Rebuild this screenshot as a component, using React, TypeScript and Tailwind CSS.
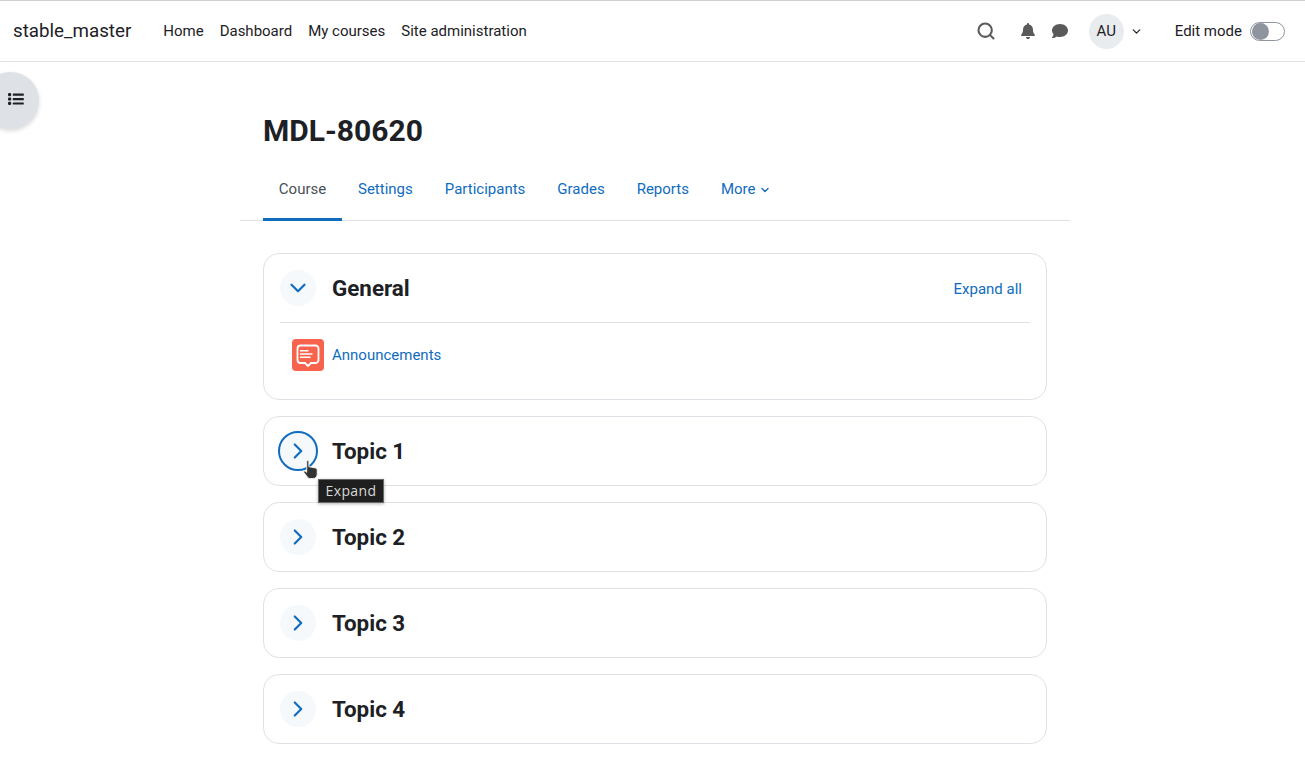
import React from "react";
import { ChevronDown, ChevronRight, Search } from "lucide-react";

const navLinks = ["Home", "Dashboard", "My courses", "Site administration"];
const tabs = ["Settings", "Participants", "Grades", "Reports"];

const BellIcon = () => (
  <svg viewBox="0 0 448 512" className="w-[14px] h-4 fill-[#5a5a5a]">
    <path d="M224 0c-17.7 0-32 14.3-32 32v19.2C119 66 64 130.6 64 208v25.4c0 45.4-15.5 89.5-43.8 124.9L5.3 377c-5.8 7.2-6.9 17.1-2.9 25.4S14.8 416 24 416h400c9.2 0 17.6-5.3 21.6-13.6s2.9-18.2-2.9-25.4l-14.9-18.6C399.5 322.9 384 278.8 384 233.4V208c0-77.4-55-142-128-156.8V32c0-17.7-14.3-32-32-32zm45.3 493.3c12-12 18.7-28.3 18.7-45.3H160c0 17 6.7 33.3 18.7 45.3S207 512 224 512s33.3-6.7 45.3-18.7z" />
  </svg>
);

const CommentIcon = () => (
  <svg viewBox="0 0 512 512" className="w-4 h-4 fill-[#5a5a5a]">
    <path d="M512 240c0 114.9-114.6 208-256 208-37.1 0-72.3-6.4-104.1-17.9-11.9 8.7-31.3 20.6-54.3 30.6C73.6 471.1 44.7 480 16 480c-6.5 0-12.3-3.9-14.8-9.9s-1.1-12.8 3.4-17.4c.4-.4 12.3-12.7 23.4-31.4 10.1-17 19.7-39.2 21.6-64.2C18.5 321.8 0 282.9 0 240 0 125.1 114.6 32 256 32s256 93.1 256 208z" />
  </svg>
);

const ListIcon = () => (
  <svg viewBox="0 0 16 16" className="w-4 h-4 fill-[#1d2125]">
    <rect x="0" y="2" width="3.2" height="3.2" rx="1.2" />
    <rect x="0" y="6.4" width="3.2" height="3.2" rx="1.2" />
    <rect x="0" y="10.8" width="3.2" height="3.2" rx="1.2" />
    <rect x="4.8" y="2.6" width="11" height="2.2" rx="0.5" />
    <rect x="4.8" y="7" width="11" height="2.2" rx="0.5" />
    <rect x="4.8" y="11.4" width="11" height="2.2" rx="0.5" />
  </svg>
);

const AnnouncementIcon = () => (
  <div className="w-8 h-8 rounded-[4px] bg-[#f7634d] flex items-center justify-center">
    <svg viewBox="0 0 32 32" className="w-8 h-8 fill-none stroke-white">
      <path
        d="M8.5 6.5h15a3 3 0 0 1 3 3V21a3 3 0 0 1-3 3H19l-3 3-3-3H8.500a3 3 0 0 1-3-3V9.500a3 3 0 0 1 3-3z"
        strokeWidth="1.8"
      />
      <path d="M8 11.7h8.500M8 15h12.500M8 18.300h10.500" strokeWidth="1.4" />
    </svg>
  </div>
);

// cursor from the screenshot, it sits over the first topic
const HandCursor = () => (
  <svg viewBox="0 0 18 22" className="absolute left-[302px] top-[459px] w-[18px] h-[21px]">
    <path
      d="M5.5 1.5c.8 0 1.3.6 1.3 1.4V8l6 1.2c1.5.3 2.700 1 2.700 2.600V16c0 2.500-1.500 4.500-4.500 4.500H8.500c-2 0-3-1-4-2.500L1.500 14c-.5-.9.8-2 1.800-1l1.200 1V2.900c0-.8.300-1.400 1-1.400z"
      fill="#333333"
      stroke="#f2f2f2"
      strokeWidth="1"
    />
  </svg>
);

const Topic = ({ title, hovered }: { title: string; hovered?: boolean }) => (
  <div className="h-[70px] border border-[#dee2e6] rounded-2xl pl-4 flex items-center bg-white">
    <div
      className={`w-9 h-9 rounded-full bg-[#f5f9fc] flex items-center justify-center text-[#0f6cbf] ${
        hovered ? "outline-2 outline-[#0f6cbf]" : ""
      }`}
    >
      <ChevronRight size={26} strokeWidth={2} />
    </div>
    <h3 className="ml-4 text-[22.4px] font-bold text-[#1d2125] leading-none">{title}</h3>
  </div>
);

export default function App() {
  return (
    <div className="relative h-[778px] overflow-hidden bg-white font-['Roboto',sans-serif] text-[15px] text-[#1d2125]">
      {/* ナビバー */}
      <header className="h-[62px] border-t border-b border-t-[#d0d0d0] border-b-[#e2e3e5] flex items-center pl-[13px] pr-5">
        <span className="text-[18.75px] mr-8">stable_master</span>
        <nav className="flex gap-4">
          {navLinks.map((link) => (
            <a key={link} className="text-[15px]">
              {link}
            </a>
          ))}
        </nav>
        <div className="ml-auto flex items-center">
          <Search size={20} strokeWidth={2.5} className="text-[#5a5a5a]" />
          <div className="ml-[25px]">
            <BellIcon />
          </div>
          <div className="ml-[17px]">
            <CommentIcon />
          </div>
          <div className="ml-[21px] w-[35px] h-[35px] rounded-full bg-[#e9ecef] flex items-center justify-center text-[15px]">
            AU
          </div>
          <ChevronDown size={13} strokeWidth={2.25} className="ml-[6px]" />
          <span className="ml-[32px]">Edit mode</span>
          <div className="ml-2 w-[35px] h-[19px] rounded-full border border-[#8f959e] flex items-center pl-[1px]">
            <div className="w-[17px] h-[17px] rounded-full bg-[#8f959e]" />
          </div>
        </div>
      </header>

      {/* ドロワーボタン */}
      <div className="absolute left-[-18px] top-[72px] w-[57px] h-[57px] rounded-full bg-[#dee2e6] shadow-[0_2px_4px_rgba(0,0,0,0.15)] flex items-center justify-end pr-[15px] pb-[3px]">
        <ListIcon />
      </div>

      <main className="ml-[240px] w-[830px]">
        <h1 className="pl-[23px] pt-[51px] text-[30px] leading-[36px] font-bold">MDL-80620</h1>

        {/* タブ */}
        <div className="mt-[11px] h-[61px] border-b border-[#dee2e6] pl-[23px] flex">
          <a className="h-[61px] w-[79px] border-b-[3px] border-[#0f6cbf] text-[#495057] flex items-center justify-center">
            Course
          </a>
          {tabs.map((tab) => (
            <a key={tab} className="h-[60px] px-4 text-[#0f6cbf] flex items-center pb-[2px]">
              {tab}
            </a>
          ))}
          <a className="h-[60px] px-4 text-[#0f6cbf] flex items-center gap-[3px] pb-[2px]">
            More
            <ChevronDown size={12} strokeWidth={2.75} className="mt-[2px]" />
          </a>
        </div>

        <div className="mx-[23px] mt-[32px] flex flex-col gap-4">
          {/* General */}
          <section className="h-[147px] border border-[#dee2e6] rounded-2xl px-4 pt-4">
            <div className="h-[36px] box-content flex items-center border-b border-[#dee2e6] pb-4">
              <div className="w-9 h-9 rounded-full bg-[#f5f9fc] flex items-center justify-center text-[#0f6cbf]">
                <ChevronDown size={26} strokeWidth={2} />
              </div>
              <h3 className="ml-4 text-[22.4px] font-bold leading-none">General</h3>
              <a className="ml-auto mr-2 mt-[2px] text-[#0f6cbf]">Expand all</a>
            </div>
            <div className="mt-4 pl-3 flex items-center gap-2">
              <AnnouncementIcon />
              <a className="text-[#0f6cbf]">Announcements</a>
            </div>
          </section>

          <Topic title="Topic 1" hovered />
          <Topic title="Topic 2" />
          <Topic title="Topic 3" />
          <Topic title="Topic 4" />
        </div>
      </main>

      <HandCursor />
      {/* ツールチップ */}
      <div className="absolute left-[318px] top-[479px] h-6 w-[66px] justify-center pb-[2px] bg-[#1f1f1f] border border-[#d8d8d8]/40 text-[#d8d8d8] text-[14px] tracking-[0.4px] font-['Open_Sans',sans-serif] flex items-center shadow-[0_1px_3px_rgba(0,0,0,0.3)]">
        Expand
      </div>
    </div>
  );
}
